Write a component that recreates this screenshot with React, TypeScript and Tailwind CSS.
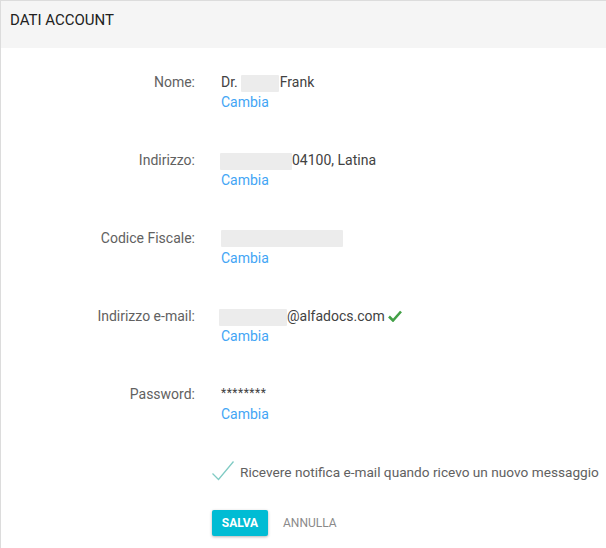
import React from 'react';

const font = { fontFamily: 'Roboto, "Liberation Sans", sans-serif' };

function Blur({ w }: { w: number }) {
  return <span className="inline-block h-[17px] align-middle bg-[#ececec] rounded-[1px]" style={{ width: w }} />;
}

function Row({ label, children }: { label: string; children: React.ReactNode }) {
  return (
    <div className="grid grid-cols-[194px_1fr] gap-x-[26px]">
      <div className="text-right text-[14px] leading-[20px] text-[#616161]">{label}</div>
      <div className="text-[14px] leading-[20px] text-[#424242]">
        <div className="flex items-center h-[20px]">{children}</div>
        <a className="text-[#42a5f5] cursor-pointer">Cambia</a>
      </div>
    </div>
  );
}

export default function App() {
  return (
    <div className="w-[606px] h-[548px] bg-white border-t border-l border-[#dcdcdc] overflow-hidden" style={font}>
      <div className="bg-[#f5f5f5] h-[47px] px-[9px] pt-[9px]">
        <h2 className="text-[15px] leading-[20px] text-[#212121]">DATI ACCOUNT</h2>
      </div>
      <div className="pt-[24px] flex flex-col gap-[38px]">
        <Row label="Nome:">
          <span>Dr.</span>
          <span className="ml-[3px] mr-[1px]"><Blur w={38} /></span>
          <span>Frank</span>
        </Row>
        <Row label="Indirizzo:">
          <span className="-ml-[1px]"><Blur w={72} /></span>
          <span>04100, Latina</span>
        </Row>
        <Row label="Codice Fiscale:">
          <Blur w={122} />
        </Row>
        <Row label="Indirizzo e-mail:">
          <span className="-ml-[2px]"><Blur w={68} /></span>
          <span>@alfadocs.com</span>
          <svg className="ml-[3px]" width="14" height="12" viewBox="0 0 14 12">
            <path d="M1 6.5 L5 10.5 L13 1.5" fill="none" stroke="#43a047" strokeWidth="2.6" />
          </svg>
        </Row>
        <Row label="Password:">
          <span className="text-[12px] tracking-[0.5px] -mt-[2px]">********</span>
        </Row>
      </div>
      <div className="pl-[210px] pt-[38px] flex items-center h-[20px] box-content">
        <svg width="24" height="22" viewBox="0 0 24 22" className="mt-[-2px] shrink-0">
          <path d="M1.5 13.5 L7.5 19.5 L22.5 1.5" fill="none" stroke="#80cbc4" strokeWidth="1.3" />
        </svg>
        <span className="ml-[5px] text-[13.65px] text-[#616161] whitespace-nowrap">Ricevere notifica e-mail quando ricevo un nuovo messaggio</span>
      </div>
      <div className="pl-[211px] pt-[28px] flex items-center">
        <button className="h-[26px] w-[56px] bg-[#00bcd4] text-white text-[12px] font-bold rounded-[2px] shadow-[0_1px_3px_rgba(0,0,0,0.3)]">
          SALVA
        </button>
        <button className="ml-[15px] text-[12px] text-[#8a8a8a]">ANNULLA</button>
      </div>
    </div>
  );
}
